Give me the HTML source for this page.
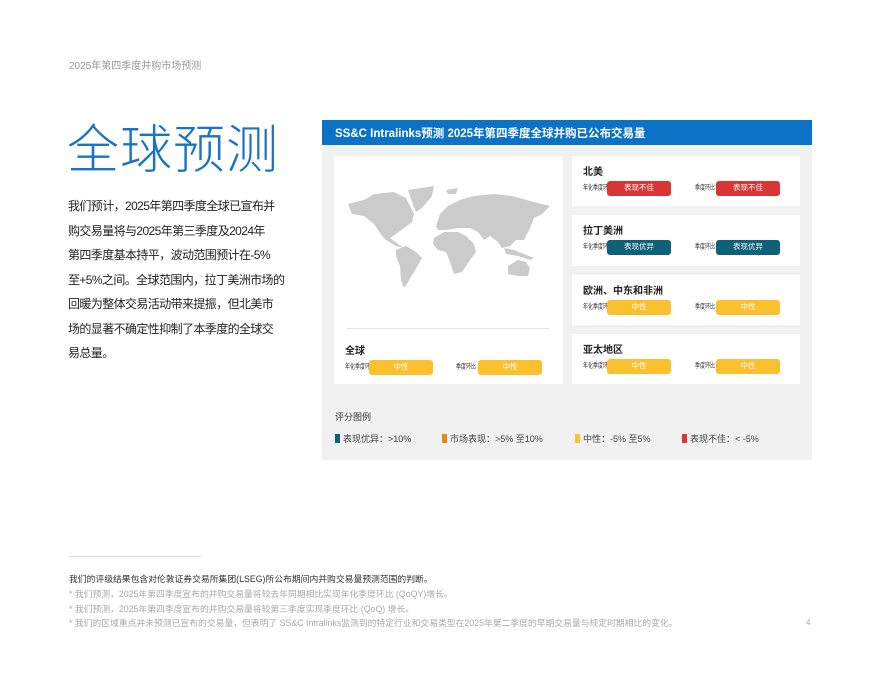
<!DOCTYPE html>
<html><head><meta charset="utf-8"><style>
*{margin:0;padding:0;box-sizing:border-box}
body{width:880px;height:680px;background:#fff;font-family:"Liberation Sans","Noto Sans CJK SC",sans-serif;position:relative;overflow:hidden;color:#222}
.abs{position:absolute}
.top{left:69px;top:57px;font-size:10px;color:#999}
h1{position:absolute;left:67px;top:108px;font-size:52px;font-weight:300;color:#1a73c8;letter-spacing:1px;font-family:"Noto Sans CJK SC",sans-serif}
.intro{left:68px;top:194px;font-size:12px;line-height:24.5px;color:#222;white-space:nowrap;letter-spacing:-0.6px}
.panel{left:322px;top:120px;width:490px;height:340px;background:#f1f1f1}
.hdr{left:322px;top:120px;width:490px;height:25px;background:#0b72c5;color:#fff;font-size:11.5px;font-weight:bold;padding:5px 0 0 13px}
.card{background:#fff;position:absolute}
.ct{position:absolute;font-size:10px;font-weight:bold;color:#222}
.lb{position:absolute;font-size:5px;color:#333;transform:scaleY(1.4)}
.bd{position:absolute;width:64px;height:15px;border-radius:3px;color:#fff;font-size:7.5px;text-align:center;line-height:14px}
.red{background:#d93535}.teal{background:#0e6178}.yel{background:#fbc02d}
.leg{position:absolute;top:432px;font-size:9px;color:#444}
.leg i{display:inline-block;width:5px;height:9px;vertical-align:-1px;margin-right:3px}
.fn{left:69px;font-size:8.8px;color:#aaa;white-space:nowrap}
</style></head><body>
<div class="abs top">2025年第四季度并购市场预测</div>
<h1>全球预测</h1>
<div class="abs intro">我们预计，2025年第四季度全球已宣布并<br>购交易量将与2025年第三季度及2024年<br>第四季度基本持平，波动范围预计在-5%<br>至+5%之间。全球范围内，拉丁美洲市场的<br>回暖为整体交易活动带来提振，但北美市<br>场的显著不确定性抑制了本季度的全球交<br>易总量。</div>
<div class="abs panel"></div>
<div class="abs hdr">SS&amp;C Intralinks预测 2025年第四季度全球并购已公布交易量</div>
<div class="card" style="left:334px;top:156px;width:229px;height:228px">
<svg width="229" height="170" viewBox="0 0 229 170" style="position:absolute;left:0;top:0">
<g fill="#cbcbcb">
<path d="M14 48 L30 44 L40 38 L60 36 L72 42 L76 50 L80 58 L78 66 L70 72 L62 78 L56 82 L64 88 L70 92 L62 90 L52 84 L48 80 L40 68 L30 60 L18 58 Z"/>
<path d="M74 34 L100 30 L98 40 L88 52 L82 56 L78 46 Z"/>
<path d="M62 94 L72 90 L82 96 L88 102 L80 116 L74 126 L70 132 L67 124 L66 110 L62 100 Z"/>
<path d="M102 70 L106 58 L114 50 L126 44 L140 40 L160 38 L178 40 L200 46 L216 50 L208 58 L200 62 L196 72 L190 84 L182 84 L176 90 L168 92 L164 86 L156 80 L150 84 L144 76 L136 72 L124 72 L112 74 L104 74 Z"/>
<path d="M100 82 L110 76 L124 76 L132 80 L140 88 L142 96 L136 104 L128 116 L120 118 L116 106 L112 96 L104 94 L99 88 Z"/>
<path d="M170 92 L180 94 L190 98 L200 102 L196 104 L184 100 L172 98 Z"/>
<path d="M174 110 L184 104 L192 106 L196 112 L194 120 L184 120 L174 118 Z"/>
<path d="M112 34 L124 32 L122 38 L114 38 Z"/>
</g></svg>
<div class="abs" style="left:12px;top:172px;width:204px;height:1px;background:#e6e6e6"></div>
<div class="ct" style="left:11px;top:186px">全球</div>
<div class="lb" style="left:11px;top:207px">年化季度环比</div><div class="bd yel" style="left:35px;top:204px">中性</div>
<div class="lb" style="left:122px;top:207px">季度环比</div><div class="bd yel" style="left:144px;top:204px">中性</div>
</div>
<div class="card" style="left:572px;top:156px;width:228px;height:50px">
<div class="ct" style="left:11px;top:7px">北美</div>
<div class="lb" style="left:11px;top:28px">年化季度环比</div><div class="bd red" style="left:35px;top:25px">表现不佳</div>
<div class="lb" style="left:123px;top:28px">季度环比</div><div class="bd red" style="left:144px;top:25px">表现不佳</div></div>
<div class="card" style="left:572px;top:215px;width:228px;height:51px">
<div class="ct" style="left:11px;top:7px">拉丁美洲</div>
<div class="lb" style="left:11px;top:28px">年化季度环比</div><div class="bd teal" style="left:35px;top:25px">表现优异</div>
<div class="lb" style="left:123px;top:28px">季度环比</div><div class="bd teal" style="left:144px;top:25px">表现优异</div></div>
<div class="card" style="left:572px;top:275px;width:228px;height:50px">
<div class="ct" style="left:11px;top:7px">欧洲、中东和非洲</div>
<div class="lb" style="left:11px;top:28px">年化季度环比</div><div class="bd yel" style="left:35px;top:25px">中性</div>
<div class="lb" style="left:123px;top:28px">季度环比</div><div class="bd yel" style="left:144px;top:25px">中性</div></div>
<div class="card" style="left:572px;top:334px;width:228px;height:50px">
<div class="ct" style="left:11px;top:7px">亚太地区</div>
<div class="lb" style="left:11px;top:28px">年化季度环比</div><div class="bd yel" style="left:35px;top:25px">中性</div>
<div class="lb" style="left:123px;top:28px">季度环比</div><div class="bd yel" style="left:144px;top:25px">中性</div></div>
<div class="abs" style="left:335px;top:410px;font-size:9px;color:#333">评分图例</div>
<div class="leg" style="left:335px"><i style="background:#0e6178"></i>表现优异：&gt;10%</div>
<div class="leg" style="left:442px"><i style="background:#e88a1a"></i>市场表现：&gt;5% 至10%</div>
<div class="leg" style="left:575px"><i style="background:#fbc02d"></i>中性：-5% 至5%</div>
<div class="leg" style="left:682px"><i style="background:#d93535"></i>表现不佳：&lt; -5%</div>
<div class="abs" style="left:69px;top:556px;width:132px;height:1px;background:#ddd"></div>
<div class="abs fn" style="top:572px;color:#333">我们的评级结果包含对伦敦证券交易所集团(LSEG)所公布期间内并购交易量预测范围的判断。</div>
<div class="abs fn" style="top:587px">* 我们预测，2025年第四季度宣布的并购交易量将较去年同期相比实现年化季度环比 (QoQY)增长。</div>
<div class="abs fn" style="top:602px">* 我们预测，2025年第四季度宣布的并购交易量将较第三季度实现季度环比 (QoQ) 增长。</div>
<div class="abs fn" style="top:616px">* 我们的区域重点并未预测已宣布的交易量，但表明了 SS&amp;C Intralinks监测到的特定行业和交易类型在2025年第二季度的早期交易量与规定时期相比的变化。</div>
<div class="abs" style="left:806px;top:618px;font-size:8px;color:#aaa">4</div>
</body></html>
